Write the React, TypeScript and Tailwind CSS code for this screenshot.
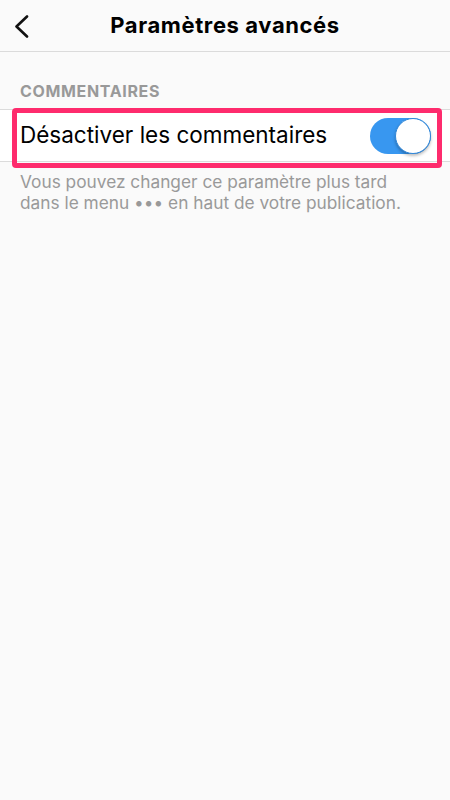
import React from "react";

export default function App() {
  return (
    <div
      className="w-[450px] h-[800px] bg-[#fafafa] text-black"
      style={{ fontFamily: 'Inter, "Liberation Sans", Arial, sans-serif' }}
    >
      <div className="relative h-[52px] flex items-center justify-center border-b border-[#dbdbdb]">
        <svg
          className="absolute left-[14px] top-[15px]"
          width="15"
          height="23"
          viewBox="0 0 15 23"
          fill="none"
        >
          <path d="M13 1.5 L2.5 11.5 L13 21.5" stroke="#111" strokeWidth="2.6" strokeLinecap="round" strokeLinejoin="round" />
        </svg>
        <span className="text-[22px] font-bold tracking-[0.6px]">Paramètres avancés</span>
      </div>
      <div className="pt-[30px] pb-[9px] px-[20px] text-[16px] font-bold text-[#999999] leading-[18px] tracking-[0.65px]">
        COMMENTAIRES
      </div>
      <div className="relative">
        <div className="h-[53px] bg-white border-y border-[#dbdbdb] flex items-center justify-between pl-[20px] pr-[19px]">
          <span className="text-[22.5px] leading-none">Désactiver les commentaires</span>
          <div className="relative w-[61px] h-[36px] rounded-full bg-[#3897f0]">
            <div className="absolute right-0 top-0 w-[36px] h-[36px] rounded-full bg-white border border-[#2f86d8] shadow-[0_2px_3px_rgba(0,0,0,0.25)]" />
          </div>
        </div>
        <div className="absolute left-[12px] top-[-1px] w-[430px] h-[60px] border-[5px] border-[#fe2b6d] rounded-[4px] pointer-events-none" />
      </div>
      <div className="px-[20px] pt-[9px] text-[17.3px] leading-[21px] text-[#999999]">
        Vous pouvez changer ce paramètre plus tard
        <br />
        dans le menu ••• en haut de votre publication.
      </div>
    </div>
  );
}
